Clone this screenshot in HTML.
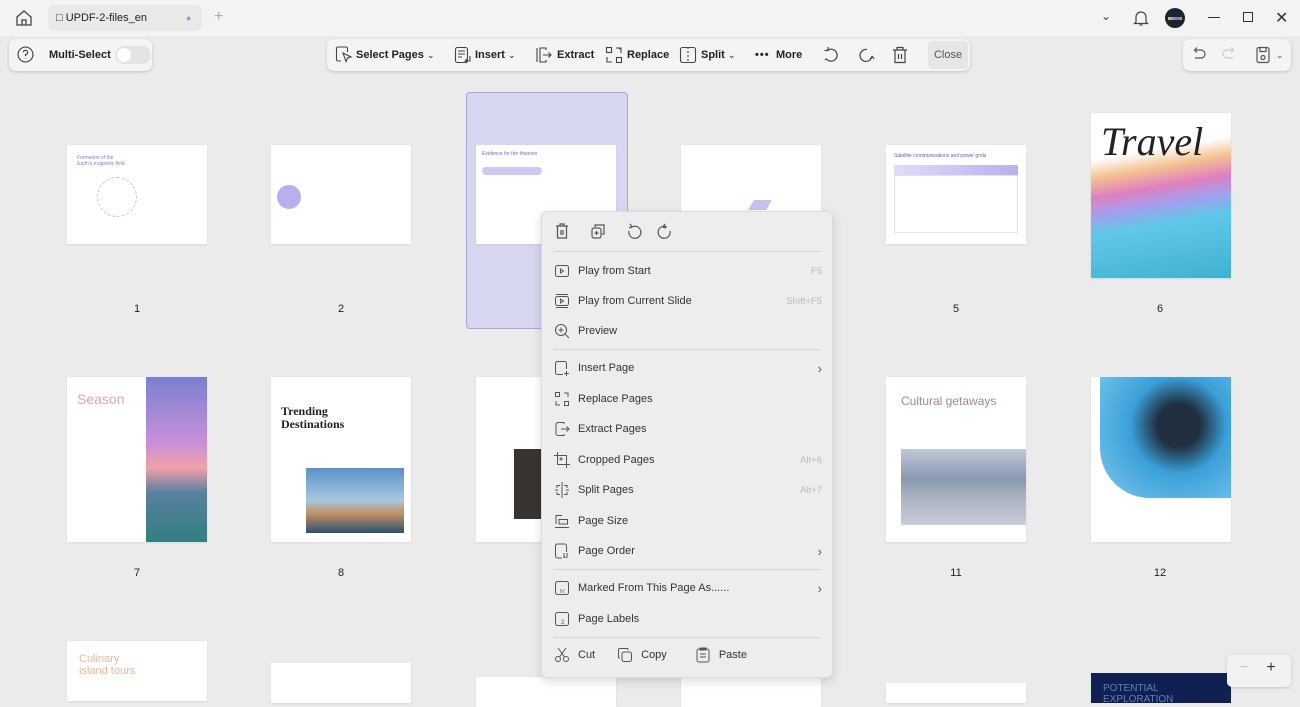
<!DOCTYPE html>
<html><head><meta charset="utf-8"><style>
*{box-sizing:border-box;margin:0;padding:0}
body{width:1300px;height:693px;overflow:hidden;background:#ebebeb;font-family:"Liberation Sans",sans-serif;position:relative;color:#222}
.abs{position:absolute}
.top{left:0;top:0;width:1300px;height:36px;background:#f3f3f3}
.tab{left:48px;top:5px;width:154px;height:26px;background:#e9e9e9;border-radius:6px;font-size:11px;line-height:26px;padding-left:8px}
.bar{background:#f4f4f4;border-radius:7px;box-shadow:0 1px 3px rgba(0,0,0,.18);height:32px;top:39px;font-size:11px;font-weight:bold}
.t{position:absolute;top:0;height:32px;line-height:32px;font-size:11px;font-weight:bold}
.bar svg{position:absolute;top:7px}
.th{background:#fff;box-shadow:0 1px 2px rgba(0,0,0,.08)}
.lbl{font-size:11px;width:40px;text-align:center}
.menu{left:541px;top:211px;width:292px;height:467px;background:#ededed;border:1px solid #dcdcdc;border-radius:6px;box-shadow:0 3px 10px rgba(0,0,0,.15);font-size:11px;color:#333}
.mi{position:absolute;left:12px;width:268px;height:22px;display:flex;align-items:center}
.mi svg{margin-right:8px}
.mi .k{margin-left:auto;color:#bbb;font-size:9.5px}
.mi .ar{margin-left:auto;color:#555;font-size:13px}
.sep{position:absolute;left:12px;width:267px;height:1px;background:#d6d6d6}
</style></head><body>
<div class="abs top"></div>
<svg class="abs" style="left:15px;top:9px" width="18" height="18" viewBox="0 0 18 18" fill="none" stroke="#444" stroke-width="1.3"><path d="M2 8 9 2l7 6v8H2z"/><path d="M7 16v-5h4v5"/></svg>
<div class="abs tab">&#9633; UPDF-2-files_en<span style="position:absolute;left:138px;color:#9a9ad0;font-size:9px">●</span></div>
<div class="abs" style="left:214px;top:8px;color:#aaa;font-size:16px">+</div>
<div class="abs" style="left:1101px;top:9px;font-size:12px;color:#444">&#8964;</div>
<svg class="abs" style="left:1133px;top:9px" width="16" height="18" viewBox="0 0 16 18" fill="none" stroke="#444" stroke-width="1.2"><path d="M3 13V8a5 5 0 0 1 10 0v5l1.5 1.5h-13z"/><path d="M6.5 16h3"/></svg>
<div class="abs" style="left:1165px;top:8px;width:20px;height:20px;border-radius:50%;background:#1a2530"><div style="margin:9px 3px;height:3px;background:linear-gradient(90deg,#f0c030,#40c0f0,#e040a0,#40e080)"></div></div>
<div class="abs" style="left:1208px;top:17px;width:12px;height:1px;background:#333"></div>
<div class="abs" style="left:1243px;top:12px;width:10px;height:10px;border:1px solid #333"></div>
<div class="abs" style="left:1275px;top:8px;font-size:16px;color:#333">✕</div>

<div class="abs bar" style="left:9px;width:143px">
<svg style="left:8px" width="17" height="17" viewBox="0 0 16 16" fill="none" stroke="#444" stroke-width="1.1"><circle cx="8" cy="8" r="7"/><path d="M6 6a2 2 0 1 1 2 2v1.5M8 11.5v.5"/></svg>
<span class="t" style="left:40px">Multi-Select</span>
<span style="position:absolute;left:106px;top:7px;width:36px;height:18px;border-radius:9px;background:#e3e3e3"><span style="position:absolute;left:2px;top:2px;width:14px;height:14px;border-radius:50%;background:#fff"></span></span>
</div>

<div class="abs bar" style="left:327px;width:643px" >
<svg style="left:8px" width="18" height="18" viewBox="0 0 18 18" fill="none" stroke="#444" stroke-width="1.1"><path d="M6 15H3a1.5 1.5 0 0 1-1.5-1.5v-11A1.5 1.5 0 0 1 3 1h8a1.5 1.5 0 0 1 1.5 1.5V6"/><path d="M8 7l8 4-3.5 1-1.5 3.5z"/></svg>
<span class="t" style="left:29px">Select Pages <span style="font-weight:normal;font-size:9px">&#8964;</span></span>
<svg style="left:127px" width="18" height="18" viewBox="0 0 18 18" fill="none" stroke="#444" stroke-width="1.1"><rect x="1.5" y="1.5" width="12" height="15" rx="2"/><path d="M4 5h7M4 8h7M4 11h4M16 10v5h-5M13 13l-2 2 2 2"/></svg>
<span class="t" style="left:148px">Insert <span style="font-weight:normal;font-size:9px">&#8964;</span></span>
<svg style="left:207px" width="18" height="18" viewBox="0 0 18 18" fill="none" stroke="#444" stroke-width="1.1"><path d="M3 2v14M12 4V2H6v14h6v-2M9 9h8M14.5 6.5 17 9l-2.5 2.5"/></svg>
<span class="t" style="left:230px">Extract</span>
<svg style="left:278px" width="18" height="18" viewBox="0 0 18 18" fill="none" stroke="#444" stroke-width="1.1"><rect x="1.5" y="1.5" width="5" height="5"/><rect x="11.5" y="11.5" width="5" height="5"/><path d="M11 2h5v5M14 3l2-1M2 11v5h5"/></svg>
<span class="t" style="left:300px">Replace</span>
<svg style="left:352px" width="18" height="18" viewBox="0 0 18 18" fill="none" stroke="#444" stroke-width="1.1"><rect x="1.5" y="1.5" width="15" height="15" rx="2"/><path d="M9 1v16" stroke-dasharray="2 2"/></svg>
<span class="t" style="left:374px">Split <span style="font-weight:normal;font-size:9px">&#8964;</span></span>
<span class="t" style="left:428px;letter-spacing:1px">•••</span>
<span class="t" style="left:449px">More</span>
<svg style="left:495px" width="18" height="18" viewBox="0 0 18 18" fill="none" stroke="#444" stroke-width="1.2"><path d="M6 4a6 6 0 1 1-1.5 9"/><path d="M6 1v3.5H2.5M3 14l1.5-1.5"/></svg>
<svg style="left:530px" width="18" height="18" viewBox="0 0 18 18" fill="none" stroke="#444" stroke-width="1.2"><path d="M10 3.5a6 6 0 1 0 5 6.5"/><path d="M13 13l2.5-2.5L17 13"/></svg>
<svg style="left:565px" width="16" height="18" viewBox="0 0 16 18" fill="none" stroke="#444" stroke-width="1.2"><path d="M1 4h14M5 4V1.5h6V4M3 4v12.5h10V4M6.5 8v5M9.5 8v5"/></svg>
<div style="position:absolute;left:601px;top:2px;width:40px;height:28px;background:#e6e6e6;border-radius:4px;font-size:11px;font-weight:normal;color:#555;text-align:center;line-height:28px">Close</div>
</div>

<div class="abs bar" style="left:1183px;width:108px">
<svg style="left:8px" width="16" height="16" viewBox="0 0 16 16" fill="none" stroke="#555" stroke-width="1.2"><path d="M4 4h6a4 4 0 0 1 0 8H4M6 1.5 3.5 4 6 6.5"/></svg>
<svg style="left:38px" width="16" height="16" viewBox="0 0 16 16" fill="none" stroke="#ccc" stroke-width="1.2"><path d="M12 4H6a4 4 0 0 0 0 8h6M10 1.5 12.5 4 10 6.5"/></svg>
<svg style="left:72px" width="16" height="18" viewBox="0 0 16 18" fill="none" stroke="#555" stroke-width="1.2"><rect x="2" y="1.5" width="12" height="15" rx="2"/><path d="M5 1.5v4h6v-4"/><circle cx="8" cy="11.5" r="2"/></svg>
<span class="t" style="left:93px;font-weight:normal;font-size:9px;color:#555">&#8964;</span>
</div>

<!-- selection -->
<div class="abs" style="left:466px;top:92px;width:162px;height:237px;background:#d7d7f2;border:1px solid #a6a6e0;border-radius:4px"></div>

<!-- row1 -->
<div class="abs th" style="left:67px;top:145px;width:140px;height:99px;padding:10px"><div style="font-size:5px;color:#8a7ac0">Formation of the<br>Earth's magnetic field</div><div style="margin:10px 20px;width:40px;height:40px;border-radius:50%;border:1px dashed #c8c0e8"></div></div>
<div class="abs th" style="left:271px;top:145px;width:140px;height:99px"><div style="margin:40px 0 0 6px;width:24px;height:24px;border-radius:50%;background:#b8b0ee"></div></div>
<div class="abs th" style="left:476px;top:145px;width:140px;height:99px;padding:6px"><div style="font-size:5px;color:#7a6ac0">Evidence for the theories</div><div style="margin:10px 0;height:8px;width:60px;background:#cfc8f2;border-radius:4px"></div></div>
<div class="abs th" style="left:681px;top:145px;width:140px;height:99px"><div style="position:absolute;left:70px;top:55px;width:18px;height:10px;background:#c8c0ee;transform:skewX(-30deg)"></div></div>
<div class="abs th" style="left:886px;top:145px;width:140px;height:99px;padding:8px"><div style="font-size:5px;color:#6a5ab0">Satellite communications and power grids</div><div style="margin-top:6px;height:10px;background:linear-gradient(90deg,#e0dcf8,#b8b0ee)"></div><div style="height:58px;border:1px solid #e4e4e4"></div></div>
<div class="abs th" style="left:1091px;top:113px;width:140px;height:165px;background:linear-gradient(170deg,#fff 0 25%,#f4c090 35%,#e080c0 45%,#a0a0f0 55%,#60c8e8 65%,#40b0d0 100%)"><div style="font-family:'Liberation Serif',serif;font-style:italic;font-size:40px;padding:5px 10px">Travel</div></div>
<div class="abs lbl" style="left:117px;top:303px">1</div>
<div class="abs lbl" style="left:321px;top:303px">2</div>
<div class="abs lbl" style="left:936px;top:303px">5</div>
<div class="abs lbl" style="left:1140px;top:303px">6</div>

<!-- row2 -->
<div class="abs th" style="left:67px;top:377px;width:140px;height:165px;padding:14px 10px"><div style="color:#d8a8b8;font-size:14px">Season</div><div style="position:absolute;left:79px;top:0;width:61px;height:165px;background:linear-gradient(#7a80d0,#c890d8 40%,#f0a0a8 55%,#5a80a0 70%,#308080)"></div></div>
<div class="abs th" style="left:271px;top:377px;width:140px;height:165px;padding:28px 10px"><div style="font-family:'Liberation Serif',serif;font-weight:bold;font-size:12px;line-height:13px">Trending<br>Destinations</div><div style="position:absolute;left:35px;top:91px;width:98px;height:65px;background:linear-gradient(#5a90c8,#a8c8e0 50%,#c09060 70%,#2a5070)"></div></div>
<div class="abs th" style="left:476px;top:377px;width:70px;height:165px"><div style="position:absolute;left:38px;top:72px;width:32px;height:70px;background:#3a3430"></div></div>
<div class="abs th" style="left:886px;top:377px;width:140px;height:165px;padding:17px 15px"><div style="color:#a08890;font-size:12px">Cultural getaways</div><div style="position:absolute;left:15px;top:72px;width:125px;height:76px;background:linear-gradient(#c0c8d8,#8898b0 40%,#a8b0c0 60%,#c8ccd8)"></div></div>
<div class="abs th" style="left:1091px;top:377px;width:140px;height:165px"><div style="position:absolute;left:9px;top:0;width:131px;height:121px;background:radial-gradient(circle at 60% 40%,#203040 20%,#3aa0d8 45%,#80c8f0);border-bottom-left-radius:50px"></div></div>
<div class="abs lbl" style="left:117px;top:567px">7</div>
<div class="abs lbl" style="left:321px;top:567px">8</div>
<div class="abs lbl" style="left:936px;top:567px">11</div>
<div class="abs lbl" style="left:1140px;top:567px">12</div>

<!-- row3 -->
<div class="abs th" style="left:67px;top:641px;width:140px;height:60px;padding:12px 12px;color:#e0b8a0;font-size:11px;line-height:12px">Culinary<br>island tours</div>
<div class="abs th" style="left:271px;top:663px;width:140px;height:40px"></div>
<div class="abs th" style="left:476px;top:677px;width:140px;height:30px"></div>
<div class="abs th" style="left:681px;top:677px;width:140px;height:30px"></div>
<div class="abs th" style="left:886px;top:683px;width:140px;height:20px"></div>
<div class="abs" style="left:1091px;top:673px;width:140px;height:30px;background:#102050;color:#6080c0;font-size:10px;padding:10px 12px">POTENTIAL EXPLORATION</div>
<div class="abs" style="left:1227px;top:655px;width:64px;height:32px;background:#f2f2f2;border-radius:5px;box-shadow:0 1px 3px rgba(0,0,0,.15);font-size:16px;color:#333;padding:4px 12px">
<span style="color:#ccc">−</span><span style="margin-left:18px">+</span></div>

<!-- menu -->
<div class="abs menu">
<svg class="abs" style="left:12px;top:10px" width="120" height="18" viewBox="0 0 120 18" fill="none" stroke="#555" stroke-width="1.2">
<path d="M2 4h12M6 4V2h4v2M3.5 4v12h9V4M7 8v5M9 8v5"/>
<path d="M41 5V3h9v9h-2"/><rect x="38" y="6" width="9" height="10" rx="2"/><path d="M42.5 9v4M40.5 11h4"/>
<path d="M78 5a6 6 0 1 1-3 4"/><path d="M76 2l2 3-3 1"/>
<path d="M117 5a6 6 0 1 0 3 4" transform="translate(-4 0)"/><path d="M115 2l-2 3 3 1" transform="translate(-4 0)"/>
</svg>
<div class="sep" style="top:39px"></div>
<div class="mi" style="top:48px"><svg width="16" height="16" fill="none" stroke="#555"><rect x="1.5" y="2.5" width="13" height="11" rx="2"/><path d="M6.5 6v4l3-2z"/></svg>Play from Start<span class="k">F5</span></div>
<div class="mi" style="top:78px"><svg width="16" height="16" fill="none" stroke="#555"><rect x="1.5" y="3.5" width="13" height="9" rx="2"/><path d="M2 1.5h12M2 14.5h12M6.5 6v4l3-2z"/></svg>Play from Current Slide<span class="k">Shift+F5</span></div>
<div class="mi" style="top:108px"><svg width="16" height="16" fill="none" stroke="#555"><circle cx="7" cy="7" r="5.5"/><path d="M11 11l4 4M7 4.5v5M4.5 7h5"/></svg>Preview</div>
<div class="sep" style="top:137px"></div>
<div class="mi" style="top:145px"><svg width="16" height="16" fill="none" stroke="#555"><path d="M9 14.5H3.5a2 2 0 0 1-2-2v-9a2 2 0 0 1 2-2h7a2 2 0 0 1 2 2V9M12.5 11v5M10 13.5h5"/></svg>Insert Page<span class="ar">›</span></div>
<div class="mi" style="top:176px"><svg width="16" height="16" fill="none" stroke="#555"><rect x="1.5" y="1.5" width="4" height="4"/><rect x="10.5" y="10.5" width="4" height="4"/><path d="M10 2l4 0 0 4M2 10l0 4 4 0"/></svg>Replace Pages</div>
<div class="mi" style="top:206px"><svg width="16" height="16" fill="none" stroke="#555"><path d="M10 3V1.5H4a2 2 0 0 0-2 2v9a2 2 0 0 0 2 2h6V13M7 8h8M12.5 5.5 15 8l-2.5 2.5"/></svg>Extract Pages</div>
<div class="mi" style="top:237px"><svg width="16" height="16" fill="none" stroke="#555"><path d="M3.5 0v12.5H16M0 3.5h12.5V16"/><circle cx="7" cy="7" r="1"/></svg>Cropped Pages<span class="k">Alt+6</span></div>
<div class="mi" style="top:267px"><svg width="16" height="16" fill="none" stroke="#555"><path d="M8 0v16M3 6V3.5h3M10 3.5h3V6M3 10v2.5h3M10 12.5h3V10M1 8h3M12 8h3"/></svg>Split Pages<span class="k">Alt+7</span></div>
<div class="mi" style="top:298px"><svg width="16" height="16" fill="none" stroke="#555"><path d="M2 11V2.5h6M5 6.5h8.5V11H5zM1 14.5h14"/></svg>Page Size</div>
<div class="mi" style="top:328px"><svg width="16" height="16" fill="none" stroke="#555"><path d="M8 15H3.5a2 2 0 0 1-2-2V3a2 2 0 0 1 2-2h7a2 2 0 0 1 2 2v6M10 10v5M13 10v5M11.5 15l-1.5-1.5"/></svg>Page Order<span class="ar">›</span></div>
<div class="sep" style="top:357px"></div>
<div class="mi" style="top:365px"><svg width="16" height="16" fill="none" stroke="#555"><rect x="1.5" y="1.5" width="13" height="13" rx="2"/><text x="6" y="13" font-size="5" fill="#555" stroke="none">IV</text></svg>Marked From This Page As......<span class="ar">›</span></div>
<div class="mi" style="top:396px"><svg width="16" height="16" fill="none" stroke="#555"><rect x="1.5" y="1.5" width="13" height="13" rx="2"/><text x="7" y="13" font-size="6" fill="#555" stroke="none">2</text></svg>Page Labels</div>
<div class="sep" style="top:425px"></div>
<div class="mi" style="top:432px"><svg width="16" height="16" fill="none" stroke="#555"><circle cx="4" cy="12" r="2.5"/><circle cx="12" cy="12" r="2.5"/><path d="M5.5 10 12 1M10.5 10 4 1"/></svg>Cut
<svg width="16" height="16" fill="none" stroke="#555" style="margin-left:22px"><rect x="5" y="5" width="9.5" height="9.5" rx="2"/><path d="M3 11H2.5a1 1 0 0 1-1-1V2.5a1 1 0 0 1 1-1H10a1 1 0 0 1 1 1V3"/></svg>Copy
<svg width="16" height="16" fill="none" stroke="#555" style="margin-left:28px"><rect x="2" y="2" width="12" height="13" rx="2"/><path d="M5 1h6v2H5zM5 7h6M5 10h6"/></svg>Paste</div>
</div>
</body></html>
